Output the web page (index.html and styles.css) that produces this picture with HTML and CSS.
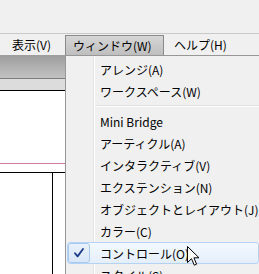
FILE: index.html
```html
<!DOCTYPE html>
<html lang="ja">
<head>
<meta charset="utf-8">
<link rel="stylesheet" href="styles.css">
</head>
<body>
<div class="screen">
  <div class="top"></div>
  <div class="menubar">
    <span class="mb-item mb-view">表示(V)</span>
    <span class="mb-item mb-window">ウィンドウ(W)</span>
    <span class="mb-item mb-help">ヘルプ(H)</span>
  </div>
  <div class="main">
    <div class="left">
      <div class="tabbar"></div>
      <div class="subbar"></div>
      <div class="canvas">
        <div class="guide"></div>
        <div class="frame"><div class="page"></div></div>
      </div>
    </div>
    <div class="menu">
      <div class="item">アレンジ(A)</div>
      <div class="item">ワークスペース(W)</div>
      <div class="sep"></div>
      <div class="item">Mini Bridge</div>
      <div class="item">アーティクル(A)</div>
      <div class="item">インタラクティブ(V)</div>
      <div class="item">エクステンション(N)</div>
      <div class="item">オブジェクトとレイアウト(J)</div>
      <div class="item">カラー(C)</div>
      <div class="item hot"><span class="check"><svg width="10" height="10" viewBox="0 0 10 10"><path d="M1 5.2 L3.6 8.4 L9 1" fill="none" stroke="#1d3b8c" stroke-width="1.8" stroke-linecap="round" stroke-linejoin="round"/></svg></span>コントロール(O)</div>
      <div class="item">スタイル(S)</div>
    </div>
  </div>
  <svg class="cursor" width="13" height="21" viewBox="0 0 13 21"><path d="M0.5 0.5 L0.5 16.5 L4.5 12.7 L7.3 19.2 L9.6 18.2 L6.9 11.8 L12 11.8 Z" fill="#fff" stroke="#000" stroke-width="1" stroke-linejoin="miter"/></svg>
</div>
</body>
</html>
```

FILE: styles.css
```css
* { box-sizing: border-box; }
html, body { margin: 0; padding: 0; }
body {
  width: 259px;
  height: 274px;
  overflow: hidden;
  background: #f0f0f0;
  font-family: "Noto Sans CJK JP", "Noto Sans", sans-serif;
  font-size: 12px;
  color: #000;
}
.screen {
  position: relative;
  width: 259px;
  height: 274px;
  overflow: hidden;
}
.top {
  height: 33px;
  background: #f0f0f0;
}
.menubar {
  height: 22px;
  border-top: 1px solid #c9c9c9;
  background: #f0f0f0;
  display: flex;
  align-items: flex-start;
  white-space: nowrap;
}
.mb-item {
  display: block;
  line-height: 20px;
  height: 21px;
}
.mb-view {
  padding-left: 12px;
  width: 65px;
  margin-top: 1px;
}
.mb-window {
  width: 99px;
  padding-left: 7px;
  margin-top: 1px;
  border: 1px solid #8a8a8a;
  border-bottom: none;
  background: linear-gradient(#d6d6d6, #bdbdbd);
}
.mb-help {
  padding-left: 10px;
  margin-top: 1px;
}
.main {
  display: flex;
  height: 219px;
}
.left {
  width: 65px;
  flex: none;
  display: flex;
  flex-direction: column;
}
.tabbar {
  height: 24px;
  background: linear-gradient(#9d9d9d, #c2c2c2);
  border-bottom: 1px solid #7c7c7c;
}
.subbar {
  height: 12px;
  background: #dcdcdc;
  border-bottom: 1px solid #000;
}
.canvas {
  flex: 1;
  background: #fff;
  display: flex;
  flex-direction: column;
}
.guide {
  margin-top: 72px;
  height: 1px;
  background: #d27d98;
}
.frame {
  margin-top: 8px;
  flex: 1;
  border-top: 1px solid #000;
}
.page {
  width: 53px;
  height: 100%;
  border-right: 1px solid #000;
}
.menu {
  flex: 1;
  border-top: 1px solid #979797;
  border-left: 1px solid #979797;
  padding-top: 2px;
  background-color: #f0f0f0;
  background-image: linear-gradient(to right, transparent 27px, #e2e3e3 27px, #e2e3e3 28px, #fff 28px, #fff 29px, transparent 29px);
  white-space: nowrap;
}
.item {
  height: 22px;
  display: flex;
  align-items: center;
  padding-left: 34px;
}
.sep {
  height: 8px;
  margin-left: 30px;
  background: linear-gradient(#f0f0f0 3px, #e0e0e0 3px, #e0e0e0 4px, #fff 4px, #fff 5px, transparent 5px);
}
.item.hot {
  margin-left: 1px;
  padding-left: 0;
  border: 1px solid #b4d2f4;
  border-radius: 3px;
  background: linear-gradient(#f3f8fe, #e4eefb);
}
.check {
  width: 22px;
  height: 20px;
  margin-right: 10px;
  border: 1px solid #a9c9ec;
  border-radius: 3px;
  background: linear-gradient(#e8f1fc, #d9e7f8);
  display: flex;
  align-items: center;
  justify-content: center;
}
.cursor {
  position: absolute;
  left: 187px;
  top: 246px;
}
```
